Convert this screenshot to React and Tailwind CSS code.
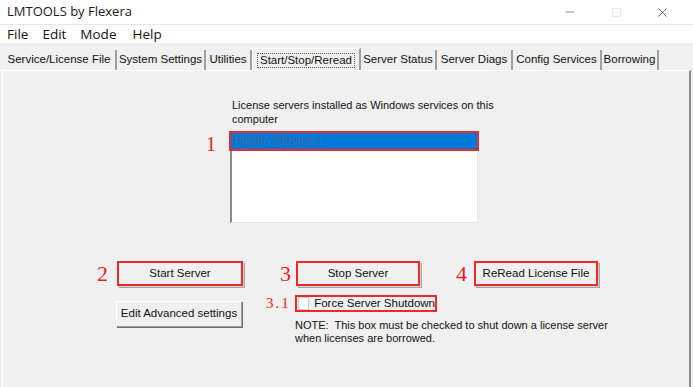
import { Minus, Square, X } from "lucide-react";

const ui = { fontFamily: '"Liberation Sans", Arial, sans-serif' };
const serif = { fontFamily: '"Liberation Serif", "Times New Roman", serif' };
const seg = { fontFamily: '"Open Sans", "Noto Sans", sans-serif' };

const tabs = [
  { label: "Service/License File", w: "w-[114px]" },
  { label: "System Settings", w: "w-[89px]" },
  { label: "Utilities", w: "w-[46px]" },
  { label: "Start/Stop/Reread", w: "w-[109px]", active: true },
  { label: "Server Status", w: "w-[76px]" },
  { label: "Server Diags", w: "w-[76px]" },
  { label: "Config Services", w: "w-[89px]" },
  { label: "Borrowing", w: "w-[57px]" },
];

function RedButton({ children, w }) {
  return (
    <div
      className={`${w} h-[25px] flex items-center justify-center bg-[#f0f0f0] border-2 border-[#ec2a2a] shadow-[1px_1px_0_#d0d0d0,2px_2px_0_#a8a8a8] text-[11.5px] text-[#111]`}
    >
      {children}
    </div>
  );
}

function Num({ children, className }) {
  return (
    <span style={serif} className={`text-[#f01c1c] leading-none ${className}`}>
      {children}
    </span>
  );
}

export default function App() {
  return (
    <div className="w-[693px] h-[387px] overflow-hidden bg-[#f0f0f0] flex flex-col whitespace-nowrap" style={ui}>
      {/* Title bar */}
      <div className="h-[25px] bg-white border-b border-[#e6e6e6] flex items-center">
        <span style={seg} className="ml-[7px] text-[13px] text-[#1a1a1a]">
          LMTOOLS by Flexera
        </span>
        <div className="ml-auto flex items-center h-full">
          <div className="w-[46px] flex justify-center">
            <Minus size={14} strokeWidth={1} className="text-[#333]" />
          </div>
          <div className="w-[46px] flex justify-center">
            <Square size={11} strokeWidth={1} className="text-[#c8c8c8]" />
          </div>
          <div className="w-[46px] flex justify-center mr-[8px]">
            <X size={15} strokeWidth={1} className="text-[#222]" />
          </div>
        </div>
      </div>

      {/* Menu */}
      <div style={seg} className="h-[18px] bg-white flex items-center text-[13.5px] text-[#111]">
        <span className="ml-[7px]">File</span>
        <span className="ml-[14px]">Edit</span>
        <span className="ml-[14px]">Mode</span>
        <span className="ml-[16px]">Help</span>
      </div>

      {/* Tabs */}
      <div className="mt-[6px] h-[21px] flex items-end pl-[3px] text-[11.5px] text-[#111]">
        {tabs.map((t) =>
          t.active ? (
            <div
              key={t.label}
              className={`${t.w} h-[23px] flex items-center justify-center border-l border-t border-white border-r-2 border-r-[#a0a0a0] bg-[#f0f0f0] -mb-[1px]`}
            >
              <span className="px-[2px] border border-dotted border-[#555] leading-[13px]">
                {t.label}
              </span>
            </div>
          ) : (
            <div
              key={t.label}
              className={`${t.w} h-[20px] flex items-center justify-center border-r-2 border-r-[#a0a0a0]`}
            >
              {t.label}
            </div>
          )
        )}
      </div>

      {/* Panel */}
      <div className="flex-1 mx-[2px] border-l border-t border-white border-r-2 border-r-[#8a8a8a] text-[11px] text-[#111]">
        <div className="ml-[229px] mt-[27px] w-[272px] leading-[14px] whitespace-normal">
          License servers installed as Windows services on this computer
        </div>

        <div className="flex items-start mt-[7px]">
          <Num className="ml-[203px] mt-[1px] w-[24px] text-[20px]">1</Num>
          <div className="w-[248px] h-[90px] bg-white border-l-2 border-l-[#8a8a8a] border-r border-b border-[#e3e3e3] flex flex-col">
            <div className="h-[16px] bg-[#0078d7] outline-2 outline-[#ec2a2a] -ml-[1px] flex items-center pl-[3px] text-[#46699c] text-[12px]">
              Flexlm Service 1
            </div>
          </div>
        </div>

        {/* Start / Stop / ReRead */}
        <div className="flex items-center mt-[38px]">
          <Num className="ml-[94px] w-[20px] text-[22px]">2</Num>
          <RedButton w="w-[126px]">Start Server</RedButton>
          <Num className="ml-[37px] w-[16px] text-[22px]">3</Num>
          <RedButton w="w-[124px]">Stop Server</RedButton>
          <Num className="ml-[36px] w-[18px] text-[22px]">4</Num>
          <RedButton w="w-[124px]">ReRead License File</RedButton>
        </div>

        <div className="flex items-start mt-[9px]">
          <div className="ml-[113px] mt-[6px] w-[126px] h-[26px] flex items-center justify-center bg-[#f0f0f0] border border-t-white border-l-white border-r-[#a0a0a0] border-b-[#a0a0a0] shadow-[1px_1px_0_#6f6f6f] text-[11.5px]">
            Edit Advanced settings
          </div>
          <div className="ml-[24px] flex flex-col">
            <div className="flex items-center">
              <Num className="w-[29px] text-[15px] tracking-[2px]">3.1</Num>
              <div className="w-[142px] h-[17px] border-2 border-[#ec2a2a] flex items-center">
                <span className="ml-[1px] w-[13px] h-[13px] bg-white border border-[#c8c8c8]" />
                <span className="ml-[5px] text-[11.5px]">Force Server Shutdown</span>
              </div>
            </div>
            <div className="ml-[29px] mt-[7px] leading-[13px]">
              <div>NOTE:&nbsp; This box must be checked to shut down a license server</div>
              <div>when licenses are borrowed.</div>
            </div>
          </div>
        </div>
      </div>
    </div>
  );
}
